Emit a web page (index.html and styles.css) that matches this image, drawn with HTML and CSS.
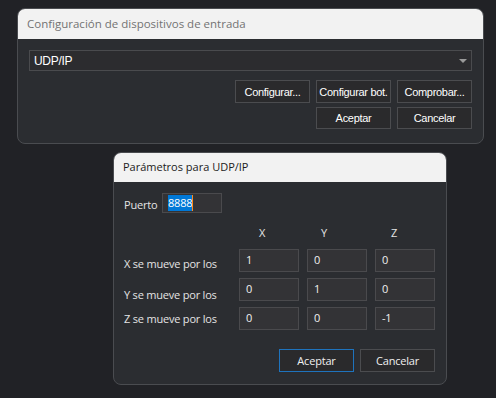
FILE: index.html
```html
<!DOCTYPE html>
<html lang="es">
<head>
    <meta charset="UTF-8">
    <title>Configuración de dispositivos de entrada</title>
    <link rel="stylesheet" href="styles.css">
</head>
<body>

    <!-- Main input devices window -->
    <div class="window devices">
        <div class="title">Configuración de dispositivos de entrada</div>
        <div class="content">
            <div class="select">
                <span>UDP/IP</span>
                <span class="arrow"></span>
            </div>
            <div class="btn-row">
                <div class="btn">Configurar...</div>
                <div class="btn">Configurar bot.</div>
                <div class="btn">Comprobar...</div>
            </div>
            <div class="btn-row second">
                <div class="btn">Aceptar</div>
                <div class="btn">Cancelar</div>
            </div>
        </div>
    </div>

    <!-- UDP/IP parameters dialog -->
    <div class="window params">
        <div class="title">Parámetros para UDP/IP</div>
        <div class="content">
            <div class="port-row">
                <span class="label">Puerto</span>
                <div class="field port"><span class="selected">8888</span><span class="caret"></span></div>
            </div>

            <div class="axis-head">
                <span class="axis ax-x">X</span>
                <span class="axis ax-y">Y</span>
                <span class="axis ax-z">Z</span>
            </div>

            <div class="axis-row">
                <span class="label row-x">X se mueve por los</span>
                <div class="field">1</div>
                <div class="field">0</div>
                <div class="field">0</div>
            </div>
            <div class="axis-row">
                <span class="label row-y">Y se mueve por los</span>
                <div class="field">0</div>
                <div class="field">1</div>
                <div class="field">0</div>
            </div>
            <div class="axis-row">
                <span class="label row-z">Z se mueve por los</span>
                <div class="field">0</div>
                <div class="field">0</div>
                <div class="field">-1</div>
            </div>

            <div class="dialog-buttons">
                <div class="dbtn default">Aceptar</div>
                <div class="dbtn">Cancelar</div>
            </div>
        </div>
    </div>

</body>
</html>
```

FILE: styles.css
```css
* {
    box-sizing: border-box;
}

body {
    margin: 0;
    background-color: #212226;
    font-family: 'Open Sans', 'Noto Sans', sans-serif;
    width: 496px;
    height: 398px;
    overflow: hidden;
}

.window {
    background-color: #2b2d31;
    border: 1px solid #4a4c50;
    border-radius: 8px;
    overflow: hidden;
}

.title {
    background-color: #f2f2f2;
    height: 30px;
    line-height: 29px;
    padding-left: 9px;
    font-size: 11.5px;
}

/* top window */
.devices {
    width: 467px;
    margin: 8px 0 0 17px;
}

.devices .title {
    color: #737373;
}

.devices .content {
    padding: 11px 11px 14px 11px;
    font-family: 'Liberation Sans', Arial, sans-serif;
    font-size: 11px;
    letter-spacing: -0.3px;
    color: #ffffff;
}

.select {
    height: 21px;
    border: 1px solid #4a4b4e;
    background-color: #2c2c2f;
    display: flex;
    align-items: center;
    justify-content: space-between;
    padding: 0 4px 0 4px;
    font-size: 12px;
}

.arrow {
    width: 0;
    height: 0;
    border-left: 4px solid transparent;
    border-right: 4px solid transparent;
    border-top: 4px solid #9a9a9a;
}

.btn-row {
    display: flex;
    justify-content: flex-end;
    gap: 6px;
    margin-top: 9px;
}

.btn-row.second {
    margin-top: 4px;
}

.btn {
    width: 75px;
    height: 23px;
    border: 1px solid #4b4c4f;
    background-color: #2a2a2c;
    display: flex;
    align-items: center;
    justify-content: center;
    white-space: nowrap;
}

.btn-row.second .btn {
    height: 22px;
}

/* parameters dialog */
.params {
    width: 334px;
    height: 233px;
    margin: 8px 0 0 113px;
}

.params .title {
    height: 29px;
    line-height: 28px;
    color: #1b1b1b;
    font-size: 11px;
}

.params .content {
    padding: 11px 11px 12px 10px;
    font-size: 11px;
    letter-spacing: -0.2px;
    color: #e4e4e4;
}

.port-row {
    display: flex;
    align-items: flex-end;
    height: 20px;
}

.port-row .label {
    width: 38px;
    line-height: 14px;
    padding-bottom: 1px;
}

.field {
    flex: 0 0 60px;
    width: 60px;
    height: 23px;
    border: 1px solid #4a4a4d;
    background-color: #333336;
    padding: 2px 0 0 6px;
    line-height: 15px;
    color: #f0f0f0;
}

.field.port {
    height: 20px;
    padding: 1px 0 0 5px;
    display: flex;
    align-items: flex-start;
}

.selected {
    background-color: #0078d7;
    color: #ffffff;
    line-height: 16px;
}

.caret {
    width: 1px;
    height: 16px;
    background-color: #ff8c1a;
}

.axis-head {
    display: flex;
    margin: 13px 0 0 115px;
    height: 23px;
}

.axis {
    line-height: 14px;
}

.ax-x { width: 68px; padding-left: 20px; }
.ax-y { width: 68px; padding-left: 14px; }
.ax-z { padding-left: 16px; }

.axis-row {
    display: flex;
    gap: 8px;
    height: 23px;
    margin-bottom: 6px;
}

.axis-row .label {
    flex: 0 0 107px;
    line-height: 14px;
    white-space: nowrap;
}

.row-x { padding-top: 8px; }
.row-y { padding-top: 10px; }
.row-z { padding-top: 5px; }

.dialog-buttons {
    display: flex;
    justify-content: flex-end;
    gap: 6px;
    margin-top: 19px;
}

.dbtn {
    width: 75px;
    height: 23px;
    border: 1px solid #4b4c4f;
    background-color: #2a2a2c;
    display: flex;
    align-items: center;
    justify-content: center;
    color: #f0f0f0;
}

.dbtn.default {
    border-color: #1e73bd;
}
```
